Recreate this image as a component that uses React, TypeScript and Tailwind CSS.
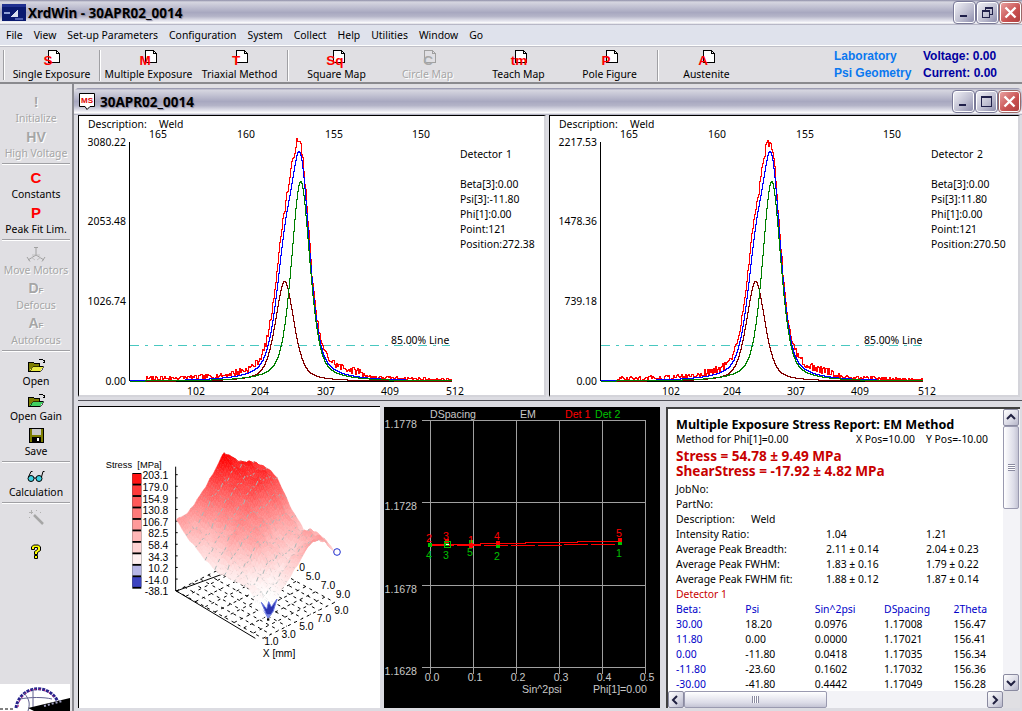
import React from "react";

const FONT = "'Noto Sans', 'Liberation Sans', Arial, sans-serif";
const LIB = "'Liberation Sans', Arial, sans-serif";
const FS = 10.4;

function rng(seed: number) {
  let s = seed;
  return () => {
    s = (s * 1664525 + 1013904223) % 4294967296;
    return s / 4294967296;
  };
}

function pv(x: number, c: number, w: number) {
  const d = (x - c) / w;
  return 0.5 * Math.exp(-0.693 * d * d) + 0.5 / (1 + d * d);
}

function stepPath(f: (x: number) => number, x0: number, x1: number, base: number) {
  let d = "";
  for (let x = x0; x <= x1; x++) {
    const y = Math.round(base - f(x)) + 0.5;
    if (x === x0) d += `M${x} ${y}`;
    else d += `V${y}H${x}`;
  }
  return d;
}

function PeakChart(props: {
  y: string[];
  det: string;
  psi: string;
  pos: string;
  seed: number;
  xs: number[];
  lineLabelX: number;
}) {
  const { y, det, psi, pos, seed, xs, lineLabelX } = props;
  const base = 266;
  const cg = 222.7;
  const cb = 206.7;
  const green = (x: number) => 200 * pv(x, cg, 11);
  const brown = (x: number) => 100 * pv(x, cb, 11);
  const blue = (x: number) => green(x) + brown(x);
  const r = rng(seed);
  const noise: number[] = [];
  for (let i = 0; i < 400; i++) noise.push(r());
  const red = (x: number) => {
    const off = x < 222 ? 1.6 : 0;
    const n = noise[x] ?? 0;
    let env = 0;
    if (x > 68) env = 4.5;
    if (x > 150 && x < 195) env = 7;
    if (x > 245 && x < 285) env = 7;
    if (x > 290) env = 3;
    if (x > 350) env = 2;
    const sh = x >= 240 && x < 285 ? 2 : 0;
    return blue(x + off) * 1.03 + n * env + sh + (x > 205 && x < 235 ? (n - 0.5) * 5 : 0);
  };
  const txt = { fontSize: FS, fill: "#000" } as const;
  return (
    <svg width="471" height="282" viewBox="0 0 471 282" className="block" style={{ fontFamily: FONT }}>
      <text x={10} y={13} {...txt}>Description:</text>
      <text x={81} y={13} {...txt}>Weld</text>
      {[["165", 80], ["160", 168], ["155", 256], ["150", 343]].map(([t, x]) => (
        <text key={t} x={x} y={23} textAnchor="middle" {...txt}>{t}</text>
      ))}
      {y.map((t, i) => (
        <text key={t} x={48} y={[31, 110, 190, 270][i]} textAnchor="end" {...txt}>{t}</text>
      ))}
      {["102", "204", "307", "409", "512"].map((t, i) => (
        <text key={t} x={xs[i]} y={280} textAnchor="middle" {...txt}>{t}</text>
      ))}
      <text x={382} y={43} {...txt}>Detector</text>
      <text x={428} y={43} {...txt}>{det}</text>
      {[`Beta[3]:0.00`, psi, "Phi[1]:0.00", "Point:121", pos].map((t, i) => (
        <text key={t} x={382} y={73 + i * 15} {...txt}>{t}</text>
      ))}
      <g shapeRendering="crispEdges">
        <line x1={51.5} y1={27} x2={51.5} y2={266} stroke="#000" />
        <line x1={52} y1={266.5} x2={374} y2={266.5} stroke="#000" />
        <line x1={52} y1={230.5} x2={372} y2={230.5} stroke="#48c8c0" strokeDasharray="9 6 3 6" />
      </g>
      <text x={lineLabelX} y={229} {...txt}>85.00% Line</text>
      <g fill="none" strokeWidth={1} shapeRendering="crispEdges">
        <path d={stepPath(red, 52, 374, base)} stroke="#ff0000" />
        <path d={stepPath(blue, 52, 374, base)} stroke="#0000ff" />
        <path d={stepPath(brown, 52, 374, base)} stroke="#800000" />
        <path d={stepPath(green, 52, 374, base)} stroke="#008000" />
      </g>
    </svg>
  );
}

const H = [
  [213, 215, 252, 294, 342, 303, 275],
  [172, 190, 240, 270, 300, 310, 293],
  [140, 175, 225, 255, 285, 295, 282],
  [124, 200, 222, 235, 225, 240, 210],
  [123, 150, 205, 190, 175, 190, 158],
  [131, 105, 125, 150, 160, 205, 182],
  [60, 92, 133, 175, 217, 208, 150],
];

function heightAt(u: number, v: number) {
  const a = Math.min(5.9999, u * 6);
  const b = Math.min(5.9999, v * 6);
  const i = Math.floor(a);
  const j = Math.floor(b);
  const s = a - i;
  const t = b - j;
  const base =
    H[i][j] * (1 - s) * (1 - t) + H[i + 1][j] * s * (1 - t) + H[i][j + 1] * (1 - s) * t + H[i + 1][j + 1] * s * t;
  const edge = Math.min(1, Math.min(u, v, 1 - u, 1 - v) * 8 + 0.35);
  const rough =
    Math.sin(u * 37 + v * 11) * 5 + Math.sin(v * 43 - u * 17) * 5 + Math.sin((u + v) * 71) * 3;
  return base + rough * edge * (u > 0.9 && v < 0.2 ? 0 : 1);
}

const L = [295, 558];
const F = [555, 700];
const B = [510, 450];

function floorPt(u: number, v: number) {
  return [L[0] + u * (F[0] - L[0]) + v * (B[0] - L[0]), L[1] + u * (F[1] - L[1]) + v * (B[1] - L[1])];
}

function surfPt(u: number, v: number) {
  const p = floorPt(u, v);
  return [p[0], p[1] - heightAt(u, v)];
}

function colour(h: number) {
  const t = Math.max(0, Math.min(1, (h - 90) / 245));
  const g = Math.round(255 * (1 - Math.pow(t, 1.35)));
  return `rgb(255,${g},${g})`;
}

function Surface() {
  const N = 45;
  const cells: React.ReactNode[] = [];
  for (let i = 0; i < N; i++) {
    for (let j = N - 1; j >= 0; j--) {
      const pts = [
        surfPt(i / N, j / N),
        surfPt((i + 1) / N, j / N),
        surfPt((i + 1) / N, (j + 1) / N),
        surfPt(i / N, (j + 1) / N),
      ];
      const h = heightAt((i + 0.5) / N, (j + 0.5) / N);
      const c = colour(h);
      cells.push(
        <polygon key={`c${i}-${j}`} points={pts.map((p) => p.join(",")).join(" ")} fill={c} stroke={c} strokeWidth={1.5} />
      );
      if (i % 5 === 0 && i > 0 && j % 2 === 0) {
        cells.push(
          <line key={`a${i}-${j}`} x1={pts[0][0]} y1={pts[0][1]} x2={pts[3][0]} y2={pts[3][1]} stroke="#aab8b8" strokeWidth={3} />
        );
      }
      if (j % 5 === 0 && j > 0 && i % 2 === 0) {
        cells.push(
          <line key={`b${i}-${j}`} x1={pts[0][0]} y1={pts[0][1]} x2={pts[1][0]} y2={pts[1][1]} stroke="#aab8b8" strokeWidth={3} />
        );
      }
    }
  }
  const floor: React.ReactNode[] = [];
  for (let k = 0; k <= 9; k++) {
    const a = floorPt(k / 9, 0);
    const b = floorPt(k / 9, 1);
    const c = floorPt(0, k / 9);
    const d = floorPt(1, k / 9);
    floor.push(<line key={`f${k}`} x1={a[0]} y1={a[1]} x2={b[0]} y2={b[1]} stroke="#000" strokeWidth={3} strokeDasharray="9 12" />);
    floor.push(<line key={`g${k}`} x1={c[0]} y1={c[1]} x2={d[0]} y2={d[1]} stroke="#000" strokeWidth={3} strokeDasharray="9 12" />);
  }
  const legend = ["#ff1414", "#ff3a3a", "#ff5a5a", "#ff7a7a", "#ff9a9a", "#ffb6b6", "#ffd2d2", "#fff0f0", "#b6b6e6", "#3c44c0"];
  const labels = ["203.1", "179.0", "154.9", "130.8", "106.7", "82.5", "58.4", "34.3", "10.2", "-14.0", "-38.1"];
  const t33 = { fontSize: 31, fill: "#000" } as const;
  return (
    <svg width="302" height="302" viewBox="0 3 906 906" className="block" style={{ fontFamily: LIB }}>
      <text x={83} y={190} {...t33} fontSize={28}>Stress</text>
      <text x={178} y={190} {...t33} fontSize={28}>[MPa]</text>
      <rect x={163} y={204} width={27} height={347} fill="#000" />
      {legend.map((c, i) => (
        <rect key={c} x={163} y={207 + i * 34.4} width={27} height={29} fill={c} />
      ))}
      {labels.map((t, i) => (
        <text key={t} x={271} y={223 + i * 34.8} textAnchor="end" {...t33}>{t}</text>
      ))}
      <line x1={293} y1={185} x2={293} y2={558} stroke="#000" strokeWidth={3} />
      {[0, 1, 2, 3, 4, 5, 6, 7, 8, 9, 10].map((i) => (
        <line key={i} x1={293} y1={209 + i * 34.8} x2={299} y2={209 + i * 34.8} stroke="#000" strokeWidth={3} />
      ))}
      <line x1={295} y1={558} x2={440} y2={505} stroke="#000" strokeWidth={3} />
      <line x1={295} y1={558} x2={532} y2={700} stroke="#000" strokeWidth={3} />
      {floor}
      {cells}
      <polygon points="570,640 550,592 566,612 572,590 580,606 597,582 586,618" fill="#2c34b0" stroke="#6a78e0" strokeWidth={3} />
      <polygon points="552,612 570,640 600,606 580,628 566,628" fill="#7a88e4" />
      <rect x={567} y={640} width={7} height={7} fill="#000" />
      <circle cx={777} cy={441} r={10} fill="none" stroke="#2030d0" strokeWidth={3} />
      <text x={580} y={720} textAnchor="middle" {...t33}>1.0</text>
      <text x={632} y={699} textAnchor="middle" {...t33}>3.0</text>
      <text x={685} y={676} textAnchor="middle" {...t33}>5.0</text>
      <text x={738} y={651} textAnchor="middle" {...t33}>7.0</text>
      <text x={790} y={626} textAnchor="middle" {...t33}>9.0</text>
      <text x={795} y={579} textAnchor="middle" {...t33}>9.0</text>
      <text x={750} y={553} textAnchor="middle" {...t33}>7.0</text>
      <text x={705} y={526} textAnchor="middle" {...t33}>5.0</text>
      <text x={668} y={499} textAnchor="middle" {...t33}>.0</text>
      <text x={603} y={755} textAnchor="middle" {...t33}>X [mm]</text>
    </svg>
  );
}

function DChart() {
  const gx = [46.5, 89.5, 132.5, 175.5, 218.5, 261.5];
  const gy = [13.5, 95.5, 178.5, 260.5];
  const gl = "#a0a0a0";
  const t = { fontSize: 10.6 } as const;
  const redM = [[63, 134], [87, 139], [114, 136], [236, 133]];
  const greenM = [[46, 138], [63, 137], [87, 135], [114, 139], [236, 136]];
  const redN: [string, number, number][] = [["2", 45, 135], ["3", 62, 133], ["1", 87, 137], ["4", 113, 133], ["5", 235, 130]];
  const greenN: [string, number, number][] = [["4", 45, 152], ["3", 62, 152], ["5", 86, 149], ["2", 113, 153], ["1", 235, 150]];
  return (
    <svg width="276" height="301" viewBox="0 0 276 301" className="block" style={{ fontFamily: LIB }}>
      <g shapeRendering="crispEdges">
        {gx.map((x) => (
          <line key={x} x1={x} y1={13} x2={x} y2={267} stroke={gl} />
        ))}
        {gy.map((y) => (
          <line key={y} x1={38} y1={y} x2={262} y2={y} stroke={gl} />
        ))}
      </g>
      {[["1.1778", 21], ["1.1728", 103], ["1.1678", 186], ["1.1628", 268]].map(([s, y]) => (
        <text key={s} x={33} y={y} textAnchor="end" fill="#c8c8c8" {...t}>{s}</text>
      ))}
      {[["0.0", 48], ["0.1", 91], ["0.2", 134], ["0.3", 177], ["0.4", 220], ["0.5", 263]].map(([s, x]) => (
        <text key={s} x={x} y={274} textAnchor="middle" fill="#c8c8c8" {...t}>{s}</text>
      ))}
      <text x={46} y={11} fill="#c8c8c8" {...t}>DSpacing</text>
      <text x={136} y={11} fill="#c8c8c8" {...t}>EM</text>
      <text x={181} y={11} fill="#ff0000" {...t}>Det 1</text>
      <text x={211} y={11} fill="#00c000" {...t}>Det 2</text>
      <text x={138} y={286} fill="#c8c8c8" {...t}>Sin^2psi</text>
      <text x={209} y={286} fill="#c8c8c8" {...t}>Phi[1]=0.00</text>
      <g shapeRendering="crispEdges">
        <path d="M46 137.5H96V136.5H141V135.5H193V134.5H236V133.5" stroke="#ff0000" fill="none" />
        <path d="M46 138.5H178V137.5H236" stroke="#ff0000" fill="none" strokeDasharray="24 3" />
        {greenM.map(([x, y]) => (
          <rect key={x} x={x - 2} y={y - 2} width={4} height={4} fill="#00c000" />
        ))}
        {redM.map(([x, y]) => (
          <rect key={x} x={x - 2} y={y - 2} width={4} height={4} fill="#ff0000" />
        ))}
        <rect x={60.5} y={134.5} width={6} height={6} fill="none" stroke="#00c000" />
        <rect x={62} y={137} width={3} height={1} fill="#fff" />
      </g>
      {redN.map(([s, x, y]) => (
        <text key={s} x={x} y={y} textAnchor="middle" fill="#ff0000" {...t}>{s}</text>
      ))}
      {greenN.map(([s, x, y]) => (
        <text key={s} x={x} y={y} textAnchor="middle" fill="#00c000" {...t}>{s}</text>
      ))}
    </svg>
  );
}

function CaptionBtn({ kind, red }: { kind: "min" | "max" | "restore" | "close"; red?: boolean }) {
  return (
    <div
      className={
        red
          ? "w-[21px] h-[21px] rounded-[3px] border border-[#fff] outline outline-1 outline-[#9a6a6a] bg-[linear-gradient(135deg,#e8a0a0,#c85050_60%,#b04040)] flex items-center justify-center"
          : "w-[21px] h-[21px] rounded-[3px] border border-[#fff] outline outline-1 outline-[#7a7a98] bg-[linear-gradient(135deg,#eeeef4,#c0c0d2_55%,#8f8fae)] flex items-center justify-center"
      }
    >
      <svg width="15" height="15" viewBox="0 0 15 15" shapeRendering="crispEdges">
        {kind === "min" && <rect x="3" y="10" width="7" height="2" fill="#20204a" />}
        {kind === "max" && (
          <path d="M2.5 2.5H12.5V12.5H2.5Z M2.5 3.5H12.5" fill="none" stroke="#20204a" strokeWidth="1" />
        )}
        {kind === "restore" && (
          <g fill="none" stroke="#20204a">
            <path d="M5.5 5V2.5H12.5V9.5H10" />
            <path d="M2.5 5.5H9.5V12.5H2.5Z" />
            <path d="M5.5 3.5H12.5" />
            <path d="M2.5 6.5H9.5" />
          </g>
        )}
        {kind === "close" && (
          <path d="M2.5 2.5L12.5 12.5M12.5 2.5L2.5 12.5" stroke="#fff" strokeWidth="2.4" shapeRendering="auto" />
        )}
      </svg>
    </div>
  );
}

function PageIcon({ letter, lx, disabled }: { letter: string; lx: number; disabled?: boolean }) {
  return (
    <svg width="44" height="18" viewBox="0 0 44 18" className="block" style={{ fontFamily: LIB }}>
      <path
        d="M18.5 0.5H26.5L29.5 3.5V12.5H18.5Z"
        fill={disabled ? "#e0dfe3" : "#fff"}
        stroke={disabled ? "#a0a0a0" : "#000"}
        shapeRendering="crispEdges"
      />
      <path d="M26.5 0.5V3.5H29.5" fill="none" stroke={disabled ? "#a0a0a0" : "#000"} shapeRendering="crispEdges" />
      <text x={lx} y={14.5} textAnchor="middle" fontSize={13.5} fontWeight="bold" fill={disabled ? "#a8a8a8" : "#ff0000"}>
        {letter}
      </text>
    </svg>
  );
}

function TB({ label, letter, lx, disabled }: { label: string; letter: string; lx: number; disabled?: boolean }) {
  return (
    <div className="w-[91px] flex flex-col items-center shrink-0 pt-[2px]">
      <PageIcon letter={letter} lx={lx} disabled={disabled} />
      <div
        className={
          disabled
            ? "text-[10.4px] leading-[13px] text-[#a6a6a6] [text-shadow:1px_1px_0_#fff] whitespace-nowrap"
            : "text-[10.4px] leading-[13px] text-black whitespace-nowrap"
        }
      >
        {label}
      </div>
    </div>
  );
}

function TSep() {
  return <div className="w-[2px] h-[31px] self-center bg-[linear-gradient(90deg,#a0a0a4_50%,#fff_50%)] shrink-0 mx-[2px]" />;
}

function Side({ icon, label, disabled }: { icon?: React.ReactNode; label?: string; disabled?: boolean }) {
  return (
    <div className="h-[35px] flex flex-col items-center">
      <div className="h-[21px] pt-[1px] flex items-center justify-center">{icon}</div>
      {label && (
        <div
          className={
            disabled
              ? "text-[10.4px] leading-[12px] text-[#a6a6a6] [text-shadow:1px_1px_0_#fff] whitespace-nowrap"
              : "text-[10.4px] leading-[12px] text-black whitespace-nowrap"
          }
        >
          {label}
        </div>
      )}
    </div>
  );
}

function SSep() {
  return <div className="h-[6px] pt-[2px] px-[2px]"><div className="h-[2px] bg-[linear-gradient(180deg,#a0a0a4_50%,#fff_50%)]" /></div>;
}

function Letter({ t, sub, gray }: { t: string; sub?: string; gray?: boolean }) {
  return (
    <span
      className={
        gray
          ? "text-[14px] leading-[18px] font-bold text-[#a6a6a6] font-['Liberation_Sans'] [text-shadow:1px_1px_0_#fff]"
          : "text-[15px] leading-[18px] font-bold text-[#ff0000] font-['Liberation_Sans']"
      }
    >
      {t}
      {sub && <span className="text-[8px] font-bold">{sub}</span>}
    </span>
  );
}

function FolderIcon({ green }: { green?: boolean }) {
  return (
    <svg width="17" height="15" viewBox="0 0 17 15" shapeRendering="crispEdges">
      <path d="M11 1.5H14.5M14.5 1.5L16.5 3.5M16.5 2V4H14.5" stroke="#000" fill="none" />
      <path d="M0.5 4.5H5.5L6.5 5.5H11.5V8.5H14V9.5L11.5 13.5H0.5Z" fill="#7d7d00" stroke="#000" />
      <path d="M1.5 13L4.5 8.5H15.5L12.5 13Z" fill={green ? "#40d060" : "#e8e840"} stroke="#000" strokeWidth="0.6" />
    </svg>
  );
}

function FloppyIcon() {
  return (
    <svg width="15" height="15" viewBox="0 0 15 15" shapeRendering="crispEdges">
      <rect x="0.5" y="0.5" width="14" height="14" fill="#7d7d00" stroke="#000" />
      <rect x="3" y="1" width="9" height="6" fill="#c8c8c8" />
      <rect x="3" y="9" width="9" height="5" fill="#000" />
      <rect x="8" y="10" width="2" height="3" fill="#fff" />
    </svg>
  );
}

function GlassesIcon() {
  return (
    <svg width="18" height="13" viewBox="0 0 18 13">
      <circle cx="4" cy="8.5" r="3" fill="#40d0e0" stroke="#000" />
      <circle cx="12" cy="8.5" r="3" fill="#40d0e0" stroke="#000" />
      <path d="M7 8H9M1.5 7L4 1.5H5.5M14.5 7L16 1.5H17.5" stroke="#000" fill="none" />
    </svg>
  );
}

function MotorsIcon() {
  return (
    <svg width="20" height="17" viewBox="0 0 20 17" fill="none" stroke="#a0a0a0">
      <path d="M10 1V9M10 9L2 14M10 9L18 14M8 1.5H12M1 11L4 15.5M16 15.5L19 11" />
      <path d="M6 9H9M11 9H14M5 11L9 14M15 11L11 14" stroke="#c0c0c0" />
    </svg>
  );
}

function WandIcon() {
  return (
    <svg width="16" height="16" viewBox="0 0 16 16" shapeRendering="crispEdges">
      <path d="M6 6L15 15" stroke="#a6a6a6" strokeWidth="2.5" shapeRendering="auto" />
      <path d="M3 1V5M1 3H5M8 1H9M12 3H13M1 8H2" stroke="#b0b0b0" />
    </svg>
  );
}

function QuestionIcon() {
  return (
    <svg width="12" height="16" viewBox="0 0 12 16">
      <path
        d="M1.5 5.5V3L3.5 1H8.5L10.5 3V6.5L7.5 8.5V10.5H4.5V7.5L7.5 5.5V3.5H4.5V5.5ZM4.5 11.5H7.5V14.5H4.5Z"
        fill="#ffff00"
        stroke="#000"
      />
    </svg>
  );
}

function AppIcon() {
  return (
    <svg width="24" height="17" viewBox="0 0 24 17" shapeRendering="crispEdges">
      <rect width="24" height="17" fill="#0a1a70" />
      <rect x="0" y="0" width="24" height="3" fill="#203090" />
      <path d="M8 13L16 6V13Z" fill="#d8e0f0" />
      <rect x="2" y="8" width="6" height="2" fill="#90a0d8" />
      <rect x="13" y="14" width="8" height="2" fill="#5060b0" />
    </svg>
  );
}

function LogoIcon() {
  return (
    <svg width="70" height="27" viewBox="0 0 70 27" className="block">
      <rect width="70" height="27" fill="#fff" />
      <path d="M16 24A22 22 0 0 1 58 18" fill="none" stroke="#28248c" strokeWidth="3" strokeDasharray="3 1" />
      <path d="M18 23A20 20 0 0 1 55 15" fill="none" stroke="#b01878" strokeWidth="1" strokeDasharray="2 3" />
      <path d="M33 5V24M20 15C30 13 44 13 52 15M24 9C30 16 30 20 28 27" fill="none" stroke="#606090" strokeWidth="1" />
      <path d="M28 24L70 14V27H34Z" fill="#000" />
      <path d="M44 22L62 17" stroke="#a0a0c0" strokeWidth="2" strokeDasharray="2 2" />
      <path d="M0 25H14" stroke="#808080" strokeWidth="2" strokeDasharray="3 2" />
    </svg>
  );
}

function Arrow({ dir }: { dir: "up" | "down" | "left" | "right" }) {
  const d = {
    up: "M2 7L6 3L10 7",
    down: "M2 4L6 8L10 4",
    left: "M7 2L3 6L7 10",
    right: "M4 2L8 6L4 10",
  }[dir];
  return (
    <svg width="12" height="12" viewBox="0 0 12 12">
      <path d={d} fill="none" stroke="#202040" strokeWidth="2" />
    </svg>
  );
}

const sbBtn =
  "w-[16px] h-[17px] flex items-center justify-center border border-[#8a8aa0] rounded-[2px] bg-[linear-gradient(135deg,#fff,#d8d8e4_60%,#b4b4c8)] shrink-0";

function Row({ cells }: { cells: string[] }) {
  return (
    <div className="flex h-[15px] leading-[15px] whitespace-nowrap">
      <div className="w-[150px]">{cells[0]}</div>
      <div className="w-[100px]">{cells[1]}</div>
      <div>{cells[2]}</div>
    </div>
  );
}

function TRow({ cells, head }: { cells: string[]; head?: boolean }) {
  return (
    <div className={head ? "flex h-[15px] leading-[15px] text-[#0000c8]" : "flex h-[15px] leading-[15px] text-black"}>
      <div className="w-[70px] text-[#0000c8]">{cells[0]}</div>
      <div className="w-[70px]">{cells[1]}</div>
      <div className="w-[70px]">{cells[2]}</div>
      <div className="w-[70px]">{cells[3]}</div>
      <div className="w-[50px]">{cells[4]}</div>
    </div>
  );
}

function Report() {
  return (
    <div className="w-[354px] h-[301px] bg-white border-t-2 border-l-2 border-[#404040] flex flex-col relative overflow-hidden">
      <div className="flex flex-1 min-h-0">
        <div className="flex-1 min-w-0 overflow-hidden pl-[8px] pt-[8px] text-[10.4px] text-black">
          <div className="h-[15px] leading-[15px] text-[12.6px] font-bold whitespace-nowrap">
            Multiple Exposure Stress Report: EM Method
          </div>
          <div className="flex h-[15px] leading-[15px] whitespace-nowrap">
            <div className="w-[180px]">Method for Phi[1]=0.00</div>
            <div className="w-[70px]">X Pos=10.00</div>
            <div>Y Pos=-10.00</div>
          </div>
          <div className="mt-[1px] h-[15px] leading-[15px] text-[13.6px] font-bold text-[#c80000] whitespace-nowrap">
            Stress = 54.78 ± 9.49 MPa
          </div>
          <div className="h-[15px] leading-[15px] text-[13.6px] font-bold text-[#c80000] whitespace-nowrap">
            ShearStress = -17.92 ± 4.82 MPa
          </div>
          <div className="mt-[4px] h-[15px] leading-[15px]">JobNo:</div>
          <div className="h-[15px] leading-[15px]">PartNo:</div>
          <div className="flex h-[15px] leading-[15px]">
            <div className="w-[75px]">Description:</div>
            <div>Weld</div>
          </div>
          <Row cells={["Intensity Ratio:", "1.04", "1.21"]} />
          <Row cells={["Average Peak Breadth:", "2.11 ± 0.14", "2.04 ± 0.23"]} />
          <Row cells={["Average Peak FWHM:", "1.83 ± 0.16", "1.79 ± 0.22"]} />
          <Row cells={["Average Peak FWHM fit:", "1.88 ± 0.12", "1.87 ± 0.14"]} />
          <div className="h-[15px] leading-[15px] text-[#c80000]">Detector 1</div>
          <TRow head cells={["Beta:", "Psi", "Sin^2psi", "DSpacing", "2Theta"]} />
          <TRow cells={["30.00", "18.20", "0.0976", "1.17008", "156.47"]} />
          <TRow cells={["11.80", "0.00", "0.0000", "1.17021", "156.41"]} />
          <TRow cells={["0.00", "-11.80", "0.0418", "1.17035", "156.34"]} />
          <TRow cells={["-11.80", "-23.60", "0.1602", "1.17032", "156.36"]} />
          <TRow cells={["-30.00", "-41.80", "0.4442", "1.17049", "156.28"]} />
        </div>
        <div className="w-[17px] bg-[#f3f3f7] flex flex-col shrink-0">
          <div className={sbBtn}><Arrow dir="up" /></div>
          <div className="h-[83px] w-[16px] border border-[#9a9ab0] rounded-[2px] bg-[linear-gradient(90deg,#fff,#dcdce8_70%,#c4c4d4)] flex items-center justify-center shrink-0">
            <div className="w-[7px] h-[7px] bg-[repeating-linear-gradient(180deg,#8a8aa0_0,#8a8aa0_1px,#fff_1px,#fff_2px)]" />
          </div>
          <div className="flex-1" />
          <div className={sbBtn}><Arrow dir="down" /></div>
        </div>
      </div>
      <div className="h-[17px] flex bg-[#f3f3f7] shrink-0 items-stretch">
        <div className={sbBtn}><Arrow dir="left" /></div>
        <div className="w-[143px] border border-[#9a9ab0] rounded-[2px] bg-[linear-gradient(180deg,#fff,#dcdce8_70%,#c4c4d4)] flex items-center justify-center shrink-0">
          <div className="w-[7px] h-[7px] bg-[repeating-linear-gradient(90deg,#8a8aa0_0,#8a8aa0_1px,#fff_1px,#fff_2px)]" />
        </div>
        <div className="flex-1" />
        <div className={sbBtn}><Arrow dir="right" /></div>
        <div className="w-[17px] bg-[#e0dfe3] shrink-0" />
      </div>
    </div>
  );
}

const titleBg =
  "bg-[linear-gradient(180deg,#8c8ca6_0,#d6d6e0_8%,#c4c4d4_25%,#a8a8c0_50%,#b4b4c8_65%,#e8e8f0_85%,#ffffff_92%,#a0a0b4_100%)]";

export default function App() {
  return (
    <div
      className="w-[1022px] h-[711px] overflow-hidden flex flex-col bg-[#e0dfe3] text-[10.4px] text-black"
      style={{ fontFamily: FONT }}
    >
      <div className={"h-[25px] shrink-0 flex items-center pl-[2px] pr-[1px] " + titleBg}>
        <AppIcon />
        <div className="ml-[2px] text-[13.5px] leading-[20px] font-bold text-black [text-shadow:1px_1px_1px_#8888a0] whitespace-nowrap">
          XrdWin - 30APR02_0014
        </div>
        <div className="flex-1" />
        <div className="flex gap-[2px]">
          <CaptionBtn kind="min" />
          <CaptionBtn kind="restore" />
          <CaptionBtn kind="close" red />
        </div>
      </div>
      <div className="h-[21px] shrink-0 bg-[#dfe2ec] border-b border-[#fff] flex items-center pl-[6px] pt-[1px] gap-[11px] text-[10.4px]">
        {["File", "View", "Set-up Parameters", "Configuration", "System", "Collect", "Help", "Utilities", "Window", "Go"].map((m) => (
          <span key={m} className="whitespace-nowrap">{m}</span>
        ))}
      </div>
      <div className="h-[38px] shrink-0 bg-[#e0dfe3] border-t border-[#c0c0c8] border-b-2 border-b-[#8a8a8e] flex items-start pl-[3px] pt-[1px]">
        <div className="w-[2px] h-[30px] mt-[2px] bg-[#fff] border-l border-[#a0a0a4] mr-[1px] shrink-0" />
        <TB label="Single Exposure" letter="S" lx={18} />
        <TSep />
        <TB label="Multiple Exposure" letter="M" lx={18} />
        <TB label="Triaxial Method" letter="T" lx={18} />
        <TSep />
        <TB label="Square Map" letter="Sq" lx={20} />
        <TB label="Circle Map" letter="C" lx={22} disabled />
        <TB label="Teach Map" letter="tm" lx={22} />
        <TB label="Pole Figure" letter="P" lx={18} />
        <TSep />
        <TB label="Austenite" letter="A" lx={18} />
        <div className="w-[82px] shrink-0" />
        <div className="w-[89px] shrink-0 text-[12px] leading-[17px] font-bold text-[#0a78f0] whitespace-nowrap font-['Liberation_Sans']">
          <div>Laboratory</div>
          <div>Psi Geometry</div>
        </div>
        <div className="text-[12px] leading-[17px] font-bold text-[#0000a0] whitespace-nowrap font-['Liberation_Sans']">
          <div>Voltage: 0.00</div>
          <div>Current: 0.00</div>
        </div>
      </div>
      <div className="flex-1 min-h-0 flex">
        <div className="w-[74px] shrink-0 border-r-2 border-[#8a8a90] flex flex-col pt-[7px]">
          <Side disabled label="Initialize" icon={<Letter t="!" gray />} />
          <Side disabled label="High Voltage" icon={<Letter t="HV" gray />} />
          <SSep />
          <Side label="Constants" icon={<Letter t="C" />} />
          <Side label="Peak Fit Lim." icon={<Letter t="P" />} />
          <SSep />
          <Side disabled label="Move Motors" icon={<MotorsIcon />} />
          <Side disabled label="Defocus" icon={<Letter t="D" sub="F" gray />} />
          <Side disabled label="Autofocus" icon={<Letter t="A" sub="F" gray />} />
          <SSep />
          <Side label="Open" icon={<FolderIcon />} />
          <Side label="Open Gain" icon={<FolderIcon green />} />
          <Side label="Save" icon={<FloppyIcon />} />
          <SSep />
          <Side label="Calculation" icon={<GlassesIcon />} />
          <SSep />
          <Side icon={<WandIcon />} />
          <Side icon={<QuestionIcon />} />
          <div className="flex-1" />
          <LogoIcon />
        </div>
        <div className="flex-1 min-w-0 pt-[4px] flex flex-col">
          <div className={"h-[27px] shrink-0 flex items-center pl-[5px] pr-[2px] rounded-t-[5px] " + titleBg}>
            <svg width="16" height="17" viewBox="0 0 16 17" className="shrink-0" style={{ fontFamily: LIB }}>
              <path d="M0.5 0.5H15.5V13.5H11L8 16.5L6 13.5H0.5Z" fill="#fff" stroke="#000" />
              <text x={8} y={9.5} textAnchor="middle" fontSize={8} fill="#e00000" fontWeight="bold">MS</text>
            </svg>
            <div className="ml-[5px] text-[13.5px] leading-[20px] font-bold text-black [text-shadow:1px_1px_1px_#8888a0] whitespace-nowrap">
              30APR02_0014
            </div>
            <div className="flex-1" />
            <div className="flex gap-[2px]">
              <CaptionBtn kind="min" />
              <CaptionBtn kind="max" />
              <CaptionBtn kind="close" red />
            </div>
          </div>
          <div className="flex-1 min-h-0 pl-[4px] bg-[#dcdce2]">
            <div className="flex gap-[3px] h-[282px]">
              <div className="w-[468px] bg-white border-t border-l border-r-2 border-b-2 border-t-black border-l-black border-r-[#d4d4da] border-b-[#d4d4da] overflow-hidden">
                <div className="-mt-[1px] -ml-[1px] w-[471px] h-[282px]">
                  <PeakChart
                    y={["3080.22", "2053.48", "1026.74", "0.00"]}
                    det="1"
                    psi="Psi[3]:-11.80"
                    pos="Position:272.38"
                    seed={7}
                    xs={[118, 182, 248, 312, 377]}
                    lineLabelX={313}
                  />
                </div>
              </div>
              <div className="w-[471px] bg-white border-t border-l border-r-2 border-b-2 border-t-black border-l-black border-r-[#d4d4da] border-b-[#d4d4da] overflow-hidden">
                <div className="-mt-[1px] -ml-[1px] w-[471px] h-[282px]">
                  <PeakChart
                    y={["2217.53", "1478.36", "739.18", "0.00"]}
                    det="2"
                    psi="Psi[3]:11.80"
                    pos="Position:270.50"
                    seed={91}
                    xs={[122, 183, 247, 311, 378]}
                    lineLabelX={315}
                  />
                </div>
              </div>
            </div>
            <div className="h-[4px] border-b border-[#505058]" />
            <div className="h-[5px]" />
            <div className="flex">
              <div className="w-[302px] h-[302px] bg-white border-t border-l border-black overflow-hidden shrink-0">
                <div className="-mt-[1px] -ml-[1px]">
                  <Surface />
                </div>
              </div>
              <div className="w-[4px] shrink-0" />
              <div className="w-[276px] h-[301px] mt-[1px] bg-black shrink-0 overflow-hidden">
                <DChart />
              </div>
              <div className="w-[6px] shrink-0" />
              <div className="mt-[1px]">
                <Report />
              </div>
            </div>
          </div>
        </div>
      </div>
    </div>
  );
}
